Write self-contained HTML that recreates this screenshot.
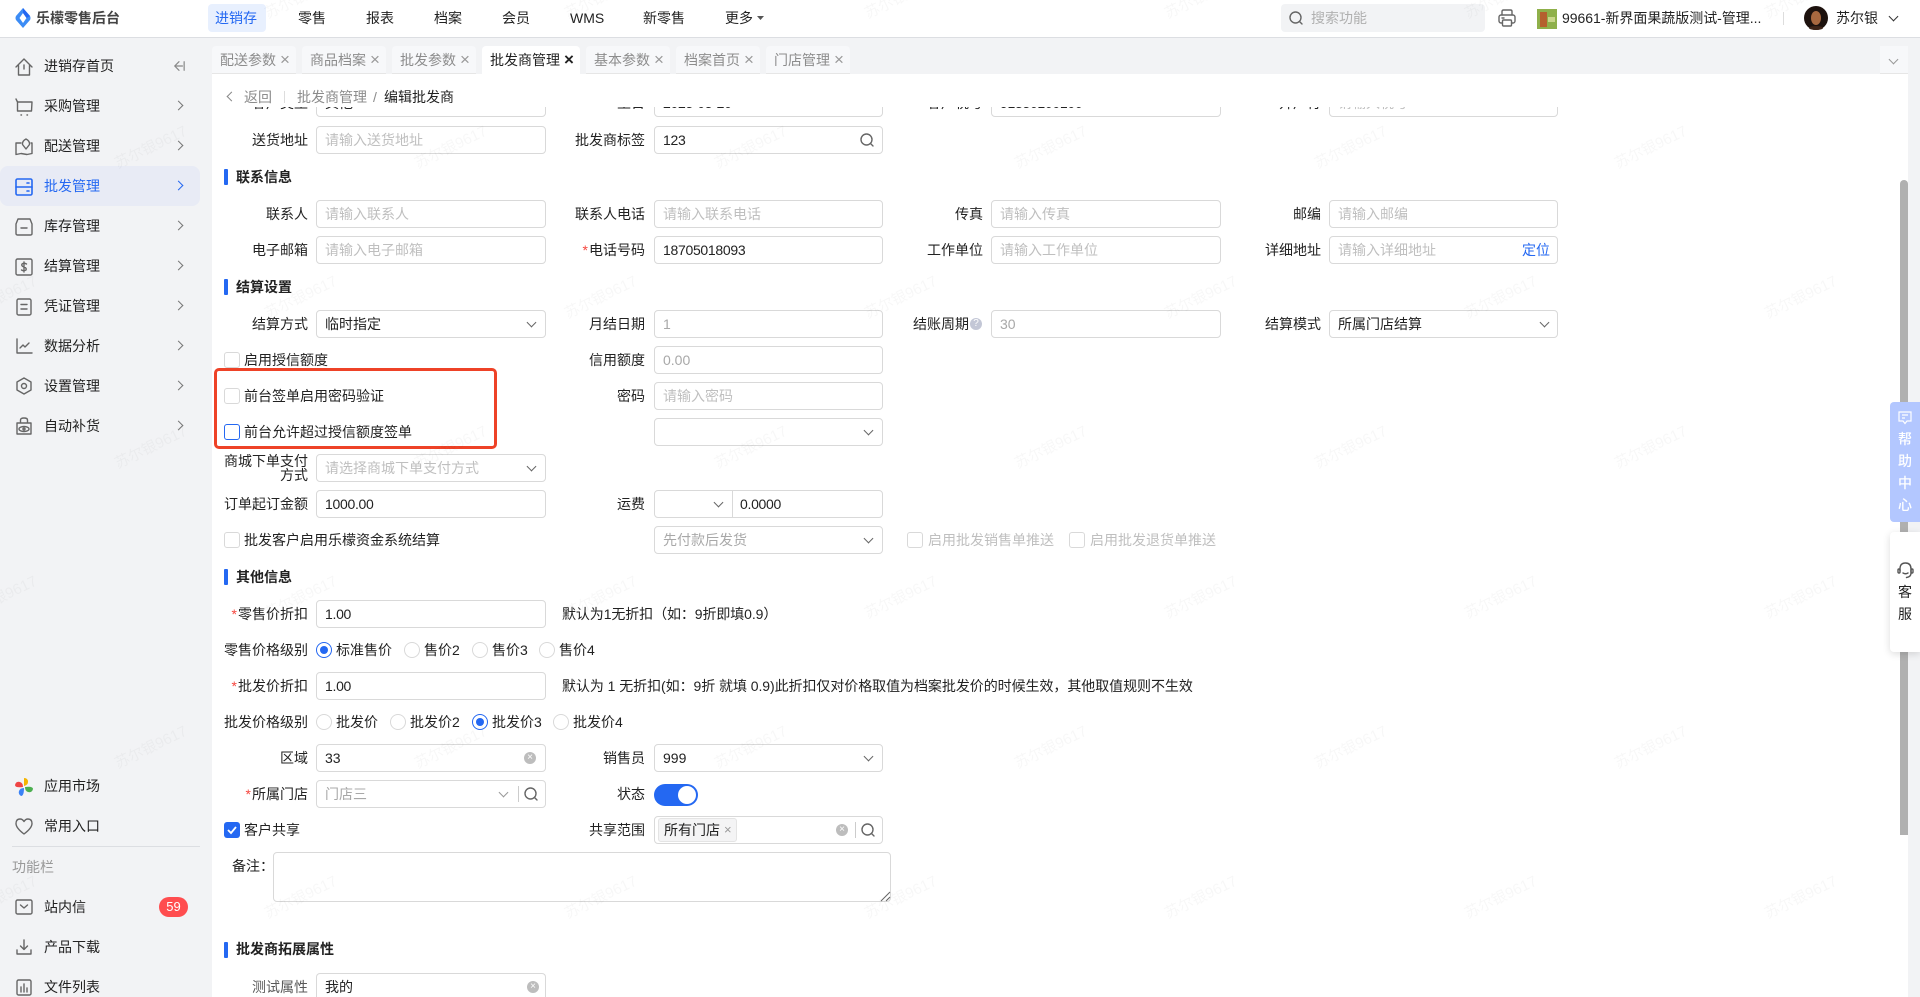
<!DOCTYPE html>
<html lang="zh-CN"><head><meta charset="utf-8"><title>乐檬零售后台</title>
<style>
*{box-sizing:border-box}
html,body{margin:0;padding:0;width:1920px;height:997px;overflow:hidden;background:#fff}
body{position:relative;font:14px/20px "Liberation Sans","Noto Sans CJK SC",sans-serif;color:#222}
.a{position:absolute;white-space:nowrap}
svg{position:absolute;overflow:visible}
.hd{position:absolute;left:0;top:0;width:1920px;height:38px;background:#fff;border-bottom:1px solid #dcdee2}
.n{position:absolute;top:8px;white-space:nowrap;color:#222}
.side{position:absolute;left:0;top:38px;width:212px;height:959px;background:#f2f3f5}
.tabs{position:absolute;left:212px;top:38px;width:1708px;height:36px;background:#f2f3f5}
.t{position:absolute;top:46px;height:28px;background:#f7f8fa;border-radius:4px 4px 0 0;border-bottom:1px solid #e6e6e6;color:#8c8c8c;line-height:28px;padding-left:8px;white-space:nowrap}
.t i{position:absolute;top:0;font-style:normal;font-size:17px;color:#999}
.t.on{background:#fff;color:#222;border-bottom:0}.t.on i{color:#222;font-weight:bold}
.m{position:absolute;left:44px;white-space:nowrap;color:#222}
.cr{position:absolute;left:175px;width:7px;height:7px;border-right:1.5px solid #777;border-bottom:1.5px solid #777;transform:rotate(-45deg)}
.form{position:absolute;left:212px;top:107px;width:1688px;height:890px;overflow:hidden;background:#fff}
.in{position:absolute;left:-212px;top:-107px;width:1920px;height:997px;overflow:hidden}
.l{position:absolute;width:120px;text-align:right;white-space:nowrap;color:#222;line-height:20px}
.l span{letter-spacing:1.500px;margin-right:-.5px}
.c1{left:188px}.c2{left:525px}.c3{left:863px}.c4{left:1201px}
.b{position:absolute;width:230px;height:28px;border:1px solid #d9d9d9;border-radius:4px;background:#fff;line-height:26px;padding-left:8px;white-space:nowrap;color:#222}
.p1{left:316px}.p2{left:654px;width:229px}.p3{left:991px}.p4{left:1329px;width:229px}
.ph{color:#bfbfbf}.dis{color:#a8a8a8}
.num{letter-spacing:-.3px;line-height:27px}
.cv{position:absolute;width:7px;height:7px;border-right:1.5px solid #666;border-bottom:1.5px solid #666;transform:rotate(45deg)}
.h{position:absolute;left:236px;font-weight:bold;color:#222;white-space:nowrap}
.bar{position:absolute;left:224px;width:4px;height:16px;background:#2468f2;border-radius:1px}
.ck{position:absolute;left:224px;width:16px;height:16px;border:1px solid #d9d9d9;border-radius:3px;background:#fff}
.r{position:absolute;width:16px;height:16px;border:1px solid #d9d9d9;border-radius:50%;background:#fff}
.r.on{border-color:#2468f2}.r.on:after{content:"";position:absolute;left:3px;top:3px;width:8px;height:8px;border-radius:50%;background:#2468f2}
.x{position:absolute;width:12px;height:12px;border-radius:50%;background:#bdbdbd;color:#fff;font-size:10px;line-height:12px;text-align:center}
.tx{position:absolute;white-space:nowrap}
.wm{position:absolute;font-size:15px;line-height:20px;color:rgba(0,0,0,.032);transform:rotate(-26deg);white-space:nowrap;pointer-events:none}
.ic{fill:none;stroke:#666;stroke-width:1.4;stroke-linecap:round;stroke-linejoin:round}
</style></head><body>

<div class="hd"></div>
<svg style="left:15px;top:8px" width="16" height="20" viewBox="0 0 16 20"><path d="M8 0L15 8Q16 10 15 12L8 20 1 12Q0 10 1 8z" fill="#3c8cf5"/><path d="M8 5L11.500 10 8 15 4.500 10z" fill="#fff"/><path d="M8 0L15 8 11.500 10 8 5z" fill="#2468f2"/></svg>
<div class="a" style="left:36px;top:8px;font-weight:bold;color:#444">乐檬零售后台</div>
<div class="a" style="left:208px;top:4px;width:58px;height:28px;background:#e8f0fe;border-radius:4px"></div>
<div class="n" style="left:215px;color:#2468f2">进销存</div>
<div class="n" style="left:298px">零售</div><div class="n" style="left:366px">报表</div><div class="n" style="left:434px">档案</div><div class="n" style="left:502px">会员</div><div class="n" style="left:570px">WMS</div><div class="n" style="left:643px">新零售</div><div class="n" style="left:725px">更多</div>
<svg style="left:757px;top:16px" width="7" height="4"><path d="M0 0H7L3.500 4z" fill="#555"/></svg>

<div class="a" style="left:1281px;top:4px;width:204px;height:28px;background:#f2f3f5;border-radius:4px"></div>
<svg class="ic" style="left:1289px;top:11px" width="14" height="14" viewBox="0 0 14 14"><circle cx="6.500" cy="6.500" r="5.500"/><path d="M10.500 10.500L13 13"/></svg>
<div class="a" style="left:1311px;top:8px;color:#b0b0b0">搜索功能</div>
<svg class="ic" style="left:1498px;top:9px" width="18" height="18" viewBox="0 0 18 18"><path d="M4 6V2.500Q4 1 5.500 1h7Q14 1 14 2.500V6"/><rect x="1" y="6" width="16" height="8" rx="2"/><rect x="4.500" y="11" width="9" height="6" rx="1" fill="#fff"/><path d="M4 9h2"/></svg>
<svg style="left:1537px;top:9px" width="20" height="20"><rect width="20" height="20" fill="#8fb04a"/><rect x="3" y="3" width="7" height="15" fill="#b5602e"/><rect x="11" y="8" width="7" height="5" fill="#c9d68a"/></svg>
<div class="a" style="left:1562px;top:8px;color:#222;letter-spacing:-.03px">99661-新界面果蔬版测试-管理...</div>
<div class="a" style="left:1783px;top:12px;width:1px;height:13px;background:#ddd"></div>
<svg style="left:1804px;top:6px" width="24" height="24"><circle cx="12" cy="12" r="12" fill="#1d120e"/><ellipse cx="12" cy="12" rx="5" ry="7" fill="#a8683f"/><ellipse cx="12" cy="22" rx="7" ry="2" fill="#3d2418"/></svg>
<div class="a" style="left:1836px;top:8px">苏尔银</div>
<div class="cv" style="left:1890px;top:13px;border-color:#333"></div>

<div class="side"></div>
<div class="tabs"></div>
<div class="t" style="left:212px;width:84px">配送参数<i style="left:68px">×</i></div>
<div class="t" style="left:302px;width:84px">商品档案<i style="left:68px">×</i></div>
<div class="t" style="left:392px;width:84px">批发参数<i style="left:68px">×</i></div>
<div class="t on" style="left:482px;width:98px">批发商管理<i style="left:82px">×</i></div>
<div class="t" style="left:586px;width:84px">基本参数<i style="left:68px">×</i></div>
<div class="t" style="left:676px;width:84px">档案首页<i style="left:68px">×</i></div>
<div class="t" style="left:766px;width:84px">门店管理<i style="left:68px">×</i></div>
<div class="a" style="left:1880px;top:46px;width:28px;height:28px;background:#f7f8fa;border-bottom:1px solid #e6e6e6"></div>
<div class="cv" style="left:1890px;top:56px;border-color:#999"></div>

<!-- sidebar -->
<div class="a" style="left:0;top:166px;width:200px;height:40px;background:#e8ebf5;border-radius:8px"></div>
<svg class="ic" style="left:15px;top:58px" width="18" height="18" viewBox="0 0 18 18"><path d="M1 9L9 1l8 8M3.500 7.500V17h11V7.500M9 7v4"/></svg>
<div class="m" style="top:56px">进销存首页</div>
<svg class="ic" style="left:173px;top:60px;stroke:#888" width="12" height="12" viewBox="0 0 14 12"><path d="M7 1L2 6l5 5M2 6h9M13 1v10"/></svg>
<svg class="ic" style="left:15px;top:98px" width="18" height="18" viewBox="0 0 18 18"><path d="M1 1l1.500 3v9h14L17 4H3"/><path d="M6 17h.5M12 17h.5"/></svg>
<div class="m" style="top:96px">采购管理</div><div class="cr" style="top:102px"></div>
<svg class="ic" style="left:15px;top:138px" width="18" height="18" viewBox="0 0 18 18"><path d="M6 5H1v11.500l5-1 6 1 5-1V5h-1"/><path d="M11 11L7.500 6.500Q7 3 11 1q4 2 3.500 5.500z"/></svg>
<div class="m" style="top:136px">配送管理</div><div class="cr" style="top:142px"></div>
<svg class="ic" style="left:15px;top:178px;stroke:#2468f2;stroke-width:1.600" width="18" height="18" viewBox="0 0 18 18"><rect x="1" y="1" width="16" height="16" rx="1.500"/><path d="M1 9h16M12 5h2M12 13h2"/></svg>
<div class="m" style="top:176px;color:#2468f2">批发管理</div><div class="cr" style="top:182px;border-color:#2468f2"></div>
<svg class="ic" style="left:15px;top:218px" width="18" height="18" viewBox="0 0 18 18"><path d="M3 1h12l2 5v9.500q0 1.500-1.500 1.500h-13Q1 17 1 15.500V6z"/><path d="M6 10h6"/></svg>
<div class="m" style="top:216px">库存管理</div><div class="cr" style="top:222px"></div>
<svg class="ic" style="left:15px;top:258px" width="18" height="18" viewBox="0 0 18 18"><rect x="1" y="1" width="16" height="16" rx="1.500"/><path d="M11.500 6Q9 4.500 7 6q-1 2 2 3 3 1 2 3-2 1.500-4.500 0M9 4v10"/></svg>
<div class="m" style="top:256px">结算管理</div><div class="cr" style="top:262px"></div>
<svg class="ic" style="left:16px;top:298px" width="16" height="18" viewBox="0 0 16 18"><rect x="1" y="1" width="14" height="16" rx="1.500"/><path d="M5 6.500h6M5 11h6"/></svg>
<div class="m" style="top:296px">凭证管理</div><div class="cr" style="top:302px"></div>
<svg class="ic" style="left:16px;top:338px" width="16" height="16" viewBox="0 0 16 16"><path d="M1 1v14h15M4 10l3-3 2 2 4-4"/></svg>
<div class="m" style="top:336px">数据分析</div><div class="cr" style="top:342px"></div>
<svg class="ic" style="left:16px;top:377px" width="16" height="18" viewBox="0 0 16 18"><path d="M8 1l7 4v8l-7 4-7-4V5z"/><circle cx="8" cy="9" r="2.500"/></svg>
<div class="m" style="top:376px">设置管理</div><div class="cr" style="top:382px"></div>
<svg class="ic" style="left:15px;top:417px" width="18" height="18" viewBox="0 0 18 18"><path d="M2 6h14v11H2zM5.500 6V3q0-2 3.500-2t3.500 2v3"/><ellipse cx="9" cy="12" rx="5" ry="2.500"/><circle cx="9" cy="12" r="1"/></svg>
<div class="m" style="top:416px">自动补货</div><div class="cr" style="top:422px"></div>

<svg style="left:15px;top:778px" width="18" height="18" viewBox="0 0 18 18"><path d="M9 0Q13 0 13 4Q13 7 9 8z" fill="#f5b400"/><path d="M10 9Q18 8 18 11Q17 15 13 14Q10 13 10 9z" fill="#4caf50"/><path d="M9 10Q9 18 6 18Q3 16 4 13Q5 10 9 10z" fill="#3b82f6"/><path d="M8 9Q0 10 0 7Q1 3 5 4Q8 5 8 9z" fill="#ef4444"/></svg>
<div class="m" style="top:776px">应用市场</div>
<svg class="ic" style="left:15px;top:818px" width="18" height="17" viewBox="0 0 18 17"><path d="M9 16Q1 10 1 5.500 1 1 5 1q2.500 0 4 2.500Q10.500 1 13 1q4 0 4 4.500Q17 10 9 16z"/></svg>
<div class="m" style="top:816px">常用入口</div>
<div class="a" style="left:12px;top:846px;width:188px;height:1px;background:#dcdee2"></div>
<div class="a" style="left:12px;top:857px;color:#999">功能栏</div>
<svg class="ic" style="left:15px;top:899px" width="18" height="16" viewBox="0 0 18 16"><rect x="1" y="1" width="16" height="14" rx="1.500"/><path d="M5.500 6L9 9l3.500-3"/></svg>
<div class="m" style="top:897px">站内信</div>
<div class="a" style="left:159px;top:897px;width:29px;height:20px;background:#ff4d4f;border-radius:10px;color:#fff;text-align:center;font-size:13px">59</div>
<svg class="ic" style="left:16px;top:939px" width="16" height="16" viewBox="0 0 16 16"><path d="M8 1v9M4.500 7L8 10.500 11.500 7M1 11v4h14v-4"/></svg>
<div class="m" style="top:937px">产品下载</div>
<svg class="ic" style="left:16px;top:979px" width="16" height="16" viewBox="0 0 16 16"><rect x="1" y="1" width="14" height="15" rx="1.500"/><path d="M5 8v5M8 5v8M11 9v4"/></svg>
<div class="m" style="top:977px">文件列表</div>

<!-- breadcrumb -->
<div class="a" style="left:212px;top:74px;width:1688px;height:33px;background:#fff"></div>
<div class="cv" style="left:228px;top:93px;transform:rotate(135deg);border-color:#888"></div>
<div class="a" style="left:244px;top:87px;color:#8c8c8c">返回</div>
<div class="a" style="left:284px;top:91px;width:1px;height:12px;background:#ddd"></div>
<div class="a" style="left:297px;top:87px;color:#8c8c8c">批发商管理</div>
<div class="a" style="left:373px;top:87px;color:#8c8c8c">/</div>
<div class="a" style="left:384px;top:87px;color:#222">编辑批发商</div>

<div class="form"><div class="in">
<!-- clipped row -->
<div class="l c1" style="top:93px">客户类型</div><div class="b p1" style="top:89px">其他</div>
<div class="l c2" style="top:93px">生日</div><div class="b p2 num" style="top:89px">2025-05-20</div>
<div class="l c3" style="top:93px">客户税号</div><div class="b p3 num" style="top:89px">91350100100</div>
<div class="l c4" style="top:93px">开户行</div><div class="b p4 ph" style="top:89px">请输入税号</div>

<div class="l c1" style="top:130px">送货地址</div><div class="b p1 ph" style="top:126px">请输入送货地址</div>
<div class="l c2" style="top:130px">批发商标签</div><div class="b p2 num" style="top:126px">123</div>
<svg class="ic" style="left:860px;top:133px" width="14" height="14" viewBox="0 0 14 14"><circle cx="6.500" cy="6.500" r="5.500"/><path d="M10.500 10.500L13 13"/></svg>

<div class="bar" style="top:169px"></div><div class="h" style="top:167px">联系信息</div>
<div class="l c1" style="top:204px">联系人</div><div class="b p1 ph" style="top:200px">请输入联系人</div>
<div class="l c2" style="top:204px">联系人电话</div><div class="b p2 ph" style="top:200px">请输入联系电话</div>
<div class="l c3" style="top:204px">传真</div><div class="b p3 ph" style="top:200px">请输入传真</div>
<div class="l c4" style="top:204px">邮编</div><div class="b p4 ph" style="top:200px">请输入邮编</div>
<div class="l c1" style="top:240px">电子邮箱</div><div class="b p1 ph" style="top:236px">请输入电子邮箱</div>
<div class="l c2" style="top:240px"><span style="color:#f5453d">*</span>电话号码</div><div class="b p2 num" style="top:236px">18705018093</div>
<div class="l c3" style="top:240px">工作单位</div><div class="b p3 ph" style="top:236px">请输入工作单位</div>
<div class="l c4" style="top:240px">详细地址</div><div class="b p4 ph" style="top:236px">请输入详细地址</div>
<div class="tx" style="left:1522px;top:240px;color:#2468f2">定位</div>

<div class="bar" style="top:279px"></div><div class="h" style="top:277px">结算设置</div>
<div class="l c1" style="top:314px">结算方式</div><div class="b p1" style="top:310px">临时指定</div><div class="cv" style="left:528px;top:319px"></div>
<div class="l c2" style="top:314px">月结日期</div><div class="b p2 dis" style="top:310px">1</div>
<div class="l" style="left:849px;top:314px">结账周期</div>
<div class="a" style="left:970px;top:318px;width:12px;height:12px;border-radius:50%;background:#c3c7d6;color:#fff;font-size:10px;line-height:12px;text-align:center">?</div>
<div class="b p3 dis" style="top:310px">30</div>
<div class="l c4" style="top:314px">结算模式</div><div class="b p4" style="top:310px">所属门店结算</div><div class="cv" style="left:1541px;top:319px"></div>

<div class="ck" style="top:352px"></div><div class="tx" style="left:244px;top:350px">启用授信额度</div>
<div class="l c2" style="top:350px">信用额度</div><div class="b p2 dis" style="top:346px">0.00</div>
<div class="ck" style="top:388px"></div><div class="tx" style="left:244px;top:386px">前台签单启用密码验证</div>
<div class="l c2" style="top:386px">密码</div><div class="b p2 ph" style="top:382px">请输入密码</div>
<div class="ck" style="top:424px;border-color:#2468f2"></div><div class="tx" style="left:244px;top:422px">前台允许超过授信额度签单</div>
<div class="b p2" style="top:418px"></div><div class="cv" style="left:865px;top:427px"></div>

<div class="a" style="left:214px;top:368px;width:283px;height:81px;border:3px solid #ee4227;border-radius:5px"></div>

<div class="l c1" style="top:454px;line-height:14px;white-space:normal;left:223px;width:85px;font-size:14px">商城下单支付方式</div>
<div class="b p1 ph" style="top:454px">请选择商城下单支付方式</div><div class="cv" style="left:528px;top:463px"></div>
<div class="l c1" style="top:494px">订单起订金额</div><div class="b p1 num" style="top:490px">1000.00</div>
<div class="l c2" style="top:494px">运费</div><div class="b p2" style="top:490px"></div>
<div class="a" style="left:732px;top:490px;width:1px;height:28px;background:#d9d9d9"></div>
<div class="cv" style="left:715px;top:499px"></div>
<div class="tx num" style="left:740px;top:494px;line-height:21px">0.0000</div>
<div class="ck" style="top:532px"></div><div class="tx" style="left:244px;top:530px">批发客户启用乐檬资金系统结算</div>
<div class="b p2 dis" style="top:526px">先付款后发货</div><div class="cv" style="left:865px;top:535px"></div>
<div class="ck" style="left:907px;top:532px"></div><div class="tx" style="left:928px;top:530px;color:#bfbfbf">启用批发销售单推送</div>
<div class="ck" style="left:1069px;top:532px"></div><div class="tx" style="left:1090px;top:530px;color:#bfbfbf">启用批发退货单推送</div>

<div class="bar" style="top:569px"></div><div class="h" style="top:567px">其他信息</div>
<div class="l c1" style="top:604px"><span style="color:#f5453d">*</span>零售价折扣</div><div class="b p1 num" style="top:600px">1.00</div>
<div class="tx" style="left:562px;top:604px;letter-spacing:-.1px">默认为1无折扣（如：9折即填0.9）</div>
<div class="l c1" style="top:640px">零售价格级别</div>
<div class="r on" style="left:316px;top:642px"></div><div class="tx" style="left:336px;top:640px">标准售价</div>
<div class="r" style="left:404px;top:642px"></div><div class="tx" style="left:424px;top:640px">售价2</div>
<div class="r" style="left:472px;top:642px"></div><div class="tx" style="left:492px;top:640px">售价3</div>
<div class="r" style="left:539px;top:642px"></div><div class="tx" style="left:559px;top:640px">售价4</div>
<div class="l c1" style="top:676px"><span style="color:#f5453d">*</span>批发价折扣</div><div class="b p1 num" style="top:672px">1.00</div>
<div class="tx" style="left:562px;top:676px;letter-spacing:-.06px">默认为 1 无折扣(如：9折 就填 0.9)此折扣仅对价格取值为档案批发价的时候生效，其他取值规则不生效</div>
<div class="l c1" style="top:712px">批发价格级别</div>
<div class="r" style="left:316px;top:714px"></div><div class="tx" style="left:336px;top:712px">批发价</div>
<div class="r" style="left:390px;top:714px"></div><div class="tx" style="left:410px;top:712px">批发价2</div>
<div class="r on" style="left:472px;top:714px"></div><div class="tx" style="left:492px;top:712px">批发价3</div>
<div class="r" style="left:553px;top:714px"></div><div class="tx" style="left:573px;top:712px">批发价4</div>
<div class="l c1" style="top:748px">区域</div><div class="b p1" style="top:744px">33</div><div class="x" style="left:524px;top:752px">×</div>
<div class="l c2" style="top:748px">销售员</div><div class="b p2" style="top:744px">999</div><div class="cv" style="left:865px;top:753px"></div>
<div class="l c1" style="top:784px"><span style="color:#f5453d">*</span>所属门店</div><div class="b p1 dis" style="top:780px">门店三</div>
<div class="cv" style="left:500px;top:789px;border-color:#999"></div>
<div class="a" style="left:518px;top:786px;width:1px;height:16px;background:#ccc"></div>
<svg class="ic" style="left:524px;top:787px" width="14" height="14" viewBox="0 0 14 14"><circle cx="6.500" cy="6.500" r="5.500"/><path d="M10.500 10.500L13 13"/></svg>
<div class="l c2" style="top:784px">状态</div>
<div class="a" style="left:654px;top:784px;width:44px;height:22px;border-radius:11px;background:#2468f2"></div>
<div class="a" style="left:678px;top:786px;width:18px;height:18px;border-radius:50%;background:#fff"></div>

<div class="a" style="left:224px;top:822px;width:16px;height:16px;border-radius:3px;background:#2468f2"></div>
<svg style="left:227px;top:826px" width="10" height="8" viewBox="0 0 10 8"><path d="M1 4l3 3 5-6" fill="none" stroke="#fff" stroke-width="1.800"/></svg>
<div class="tx" style="left:244px;top:820px">客户共享</div>
<div class="l c2" style="top:820px">共享范围</div><div class="b p2" style="top:816px"></div>
<div class="a" style="left:658px;top:818px;width:79px;height:24px;background:#f4f4f5;border:1px solid #e4e4e4;border-radius:3px;line-height:22px;padding-left:5px">所有门店</div>
<div class="tx" style="left:724px;top:820px;color:#999;font-size:13px">×</div>
<div class="x" style="left:836px;top:824px">×</div>
<div class="a" style="left:855px;top:822px;width:1px;height:16px;background:#ccc"></div>
<svg class="ic" style="left:861px;top:823px" width="14" height="14" viewBox="0 0 14 14"><circle cx="6.500" cy="6.500" r="5.500"/><path d="M10.500 10.500L13 13"/></svg>
<div class="tx" style="left:232px;top:856px">备注：</div>
<div class="a" style="left:273px;top:852px;width:618px;height:50px;border:1px solid #d9d9d9;border-radius:4px"></div>
<svg style="left:881px;top:892px" width="9" height="9"><path d="M0 9L9 0M5 9L9 5" stroke="#666" stroke-width="1"/></svg>

<div class="bar" style="top:942px"></div><div class="h" style="top:939px">批发商拓展属性</div>
<div class="l c1" style="top:977px;color:#595959">测试属性</div><div class="b p1" style="top:973px;height:24px;border-bottom:0;border-radius:4px 4px 0 0">我的</div><div class="x" style="left:527px;top:981px">×</div>
</div></div>

<!-- scrollbar -->
<div class="a" style="left:1900px;top:180px;width:8px;height:655px;background:#b0b0b0;border-radius:4px 4px 0 0"></div>
<div class="a" style="left:1908px;top:74px;width:12px;height:923px;background:#f2f3f5"></div>

<!-- float panels -->
<div class="a" style="left:1890px;top:402px;width:30px;height:120px;background:#b3c7ff;border-radius:4px 0 0 4px"></div>
<svg style="left:1898px;top:411px;fill:none;stroke:#fff;stroke-width:1.200" width="14" height="14" viewBox="0 0 14 14"><path d="M1 1h12v9H9l-2 2.500L5 10H1z"/><path d="M4 4h6M4 7h3"/></svg>
<div class="a" style="left:1898px;top:429px;color:#fff;font-weight:500">帮</div><div class="a" style="left:1898px;top:451px;color:#fff;font-weight:500">助</div><div class="a" style="left:1898px;top:473px;color:#fff;font-weight:500">中</div><div class="a" style="left:1898px;top:495px;color:#fff;font-weight:500">心</div>
<div class="a" style="left:1890px;top:532px;width:30px;height:120px;background:#fff;border-radius:4px 0 0 4px;box-shadow:0 2px 8px rgba(0,0,0,.14)"></div>
<svg class="ic" style="left:1897px;top:562px;stroke:#555" width="17" height="17" viewBox="0 0 17 17"><path d="M3 9V7q0-6 5.500-6T14 7v4q0 4-4.500 4.500"/><rect x="1" y="7" width="2" height="4" rx="1"/><rect x="14" y="7" width="2" height="4" rx="1"/><path d="M6 11q2.500 1.500 5 0"/></svg>
<div class="a" style="left:1898px;top:582px">客</div><div class="a" style="left:1898px;top:604px">服</div>

<!-- watermark -->
<div class="wm" style="left:112px;top:138px">苏尔银9617</div><div class="wm" style="left:412px;top:138px">苏尔银9617</div><div class="wm" style="left:712px;top:138px">苏尔银9617</div><div class="wm" style="left:1012px;top:138px">苏尔银9617</div><div class="wm" style="left:1312px;top:138px">苏尔银9617</div><div class="wm" style="left:1612px;top:138px">苏尔银9617</div>
<div class="wm" style="left:262px;top:-12px">苏尔银9617</div><div class="wm" style="left:562px;top:-12px">苏尔银9617</div><div class="wm" style="left:862px;top:-12px">苏尔银9617</div><div class="wm" style="left:1162px;top:-12px">苏尔银9617</div><div class="wm" style="left:1462px;top:-12px">苏尔银9617</div><div class="wm" style="left:1762px;top:-12px">苏尔银9617</div>
<div class="wm" style="left:-38px;top:288px">苏尔银9617</div><div class="wm" style="left:262px;top:288px">苏尔银9617</div><div class="wm" style="left:562px;top:288px">苏尔银9617</div><div class="wm" style="left:862px;top:288px">苏尔银9617</div><div class="wm" style="left:1162px;top:288px">苏尔银9617</div><div class="wm" style="left:1462px;top:288px">苏尔银9617</div><div class="wm" style="left:1762px;top:288px">苏尔银9617</div>
<div class="wm" style="left:112px;top:438px">苏尔银9617</div><div class="wm" style="left:412px;top:438px">苏尔银9617</div><div class="wm" style="left:712px;top:438px">苏尔银9617</div><div class="wm" style="left:1012px;top:438px">苏尔银9617</div><div class="wm" style="left:1312px;top:438px">苏尔银9617</div><div class="wm" style="left:1612px;top:438px">苏尔银9617</div>
<div class="wm" style="left:-38px;top:588px">苏尔银9617</div><div class="wm" style="left:262px;top:588px">苏尔银9617</div><div class="wm" style="left:562px;top:588px">苏尔银9617</div><div class="wm" style="left:862px;top:588px">苏尔银9617</div><div class="wm" style="left:1162px;top:588px">苏尔银9617</div><div class="wm" style="left:1462px;top:588px">苏尔银9617</div><div class="wm" style="left:1762px;top:588px">苏尔银9617</div>
<div class="wm" style="left:112px;top:738px">苏尔银9617</div><div class="wm" style="left:412px;top:738px">苏尔银9617</div><div class="wm" style="left:712px;top:738px">苏尔银9617</div><div class="wm" style="left:1012px;top:738px">苏尔银9617</div><div class="wm" style="left:1312px;top:738px">苏尔银9617</div><div class="wm" style="left:1612px;top:738px">苏尔银9617</div>
<div class="wm" style="left:-38px;top:888px">苏尔银9617</div><div class="wm" style="left:262px;top:888px">苏尔银9617</div><div class="wm" style="left:562px;top:888px">苏尔银9617</div><div class="wm" style="left:862px;top:888px">苏尔银9617</div><div class="wm" style="left:1162px;top:888px">苏尔银9617</div><div class="wm" style="left:1462px;top:888px">苏尔银9617</div><div class="wm" style="left:1762px;top:888px">苏尔银9617</div>
</body></html>
